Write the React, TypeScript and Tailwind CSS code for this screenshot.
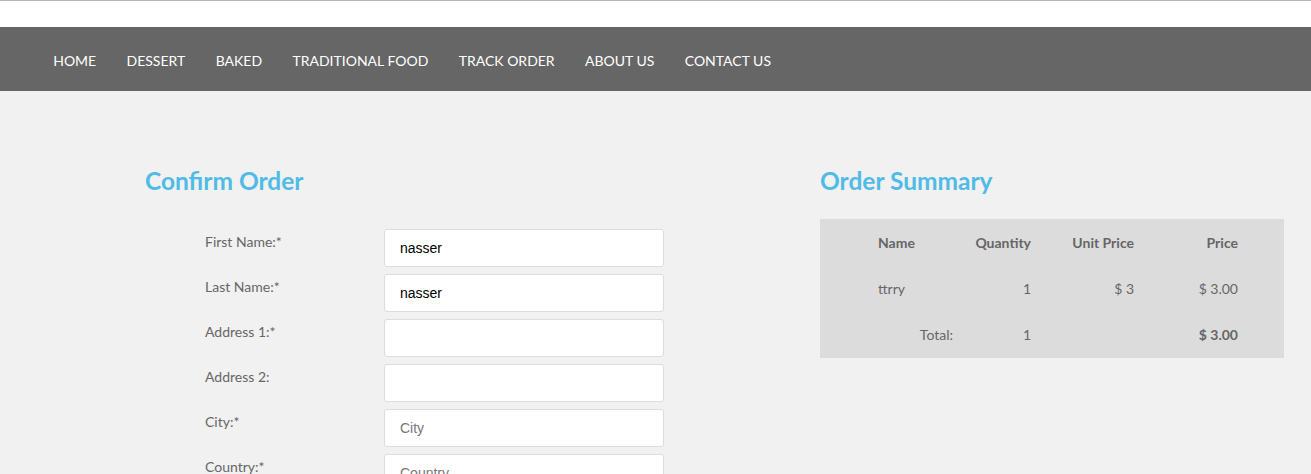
const navItems = [
  "Home",
  "Dessert",
  "Baked",
  "Traditional Food",
  "Track Order",
  "About Us",
  "Contact Us",
];

const fields = [
  { label: "First Name:*", value: "nasser", placeholder: "" },
  { label: "Last Name:*", value: "nasser", placeholder: "" },
  { label: "Address 1:*", value: "", placeholder: "" },
  { label: "Address 2:", value: "", placeholder: "" },
  { label: "City:*", value: "", placeholder: "City" },
  { label: "Country:*", value: "", placeholder: "Country" },
];

export default function App() {
  return (
    <div className="min-h-screen bg-[#f1f1f1] font-['Lato','Liberation_Sans',sans-serif] text-[#666]">
      <div className="h-[27px] border-t border-[#b4b4b4] bg-white" />
      <nav className="flex h-16 items-center bg-[#666666] pl-[38px] pt-[4px]">
        {navItems.map((item) => (
          <a
            key={item}
            href="#"
            className="px-[15.2px] text-[14px] uppercase leading-none text-white"
          >
            {item}
          </a>
        ))}
      </nav>

      <main className="flex pt-[75px]">
        <section className="w-[820px] pl-[145px]">
          <h1 className="text-[24.5px] font-bold leading-[30px] text-[#4fbbe6]">
            Confirm Order
          </h1>
          <form className="mt-[33px] flex flex-col gap-[7px] pl-[60px]">
            {fields.map((f) => (
              <div key={f.label} className="flex">
                <label className="w-[179px] pt-[3px] text-[14px] leading-[20px]">
                  {f.label}
                </label>
                <input
                  defaultValue={f.value}
                  placeholder={f.placeholder}
                  className="h-[38px] w-[280px] rounded-[3px] border border-[#dddddd] bg-white px-[15px] font-['Liberation_Sans',Arial,sans-serif] text-[14px] text-black placeholder:text-[#777]"
                />
              </div>
            ))}
          </form>
        </section>

        <section className="w-[464px]">
          <h2 className="text-[24.5px] font-bold leading-[30px] text-[#4fbbe6]">
            Order Summary
          </h2>
          <div className="mt-[23px] bg-[#dcdcdc] pl-[50px] pr-[38px] pb-[1px] text-[14px]">
            <div className="grid h-[46px] grid-cols-[91px_78px_103px_104px] items-center font-bold">
              <span className="px-2">Name</span>
              <span className="px-2 text-right">Quantity</span>
              <span className="px-2 text-right">Unit Price</span>
              <span className="px-2 text-right">Price</span>
            </div>
            <div className="grid h-[46px] grid-cols-[91px_78px_103px_104px] items-center">
              <span className="px-2">ttrry</span>
              <span className="px-2 text-right">1</span>
              <span className="px-2 text-right">$ 3</span>
              <span className="px-2 text-right">$ 3.00</span>
            </div>
            <div className="grid h-[46px] grid-cols-[91px_78px_103px_104px] items-center">
              <span className="px-2 text-right">Total:</span>
              <span className="px-2 text-right">1</span>
              <span className="px-2" />
              <span className="px-2 text-right font-bold">$ 3.00</span>
            </div>
          </div>
        </section>
      </main>
    </div>
  );
}
